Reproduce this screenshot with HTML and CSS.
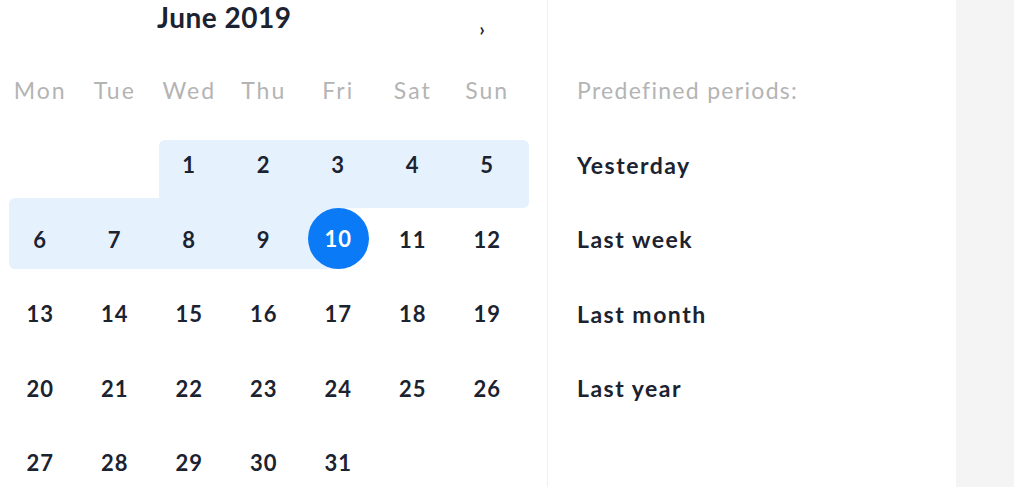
FILE: index.html
```html
<!DOCTYPE html>
<html lang="en">

<head>
    <meta charset="UTF-8">
    <meta name="viewport" content="width=device-width, initial-scale=1.0">
    <title>Date Picker</title>
    <link rel="stylesheet" href="styles.css">
</head>

<body>
    <div class="picker">
        <div class="calendar">
            <div class="cal-header">
                <span class="month-title">June 2019</span>
                <button class="next-btn">&#8250;</button>
            </div>
            <div class="cal-grid">
                <div class="weekday">Mon</div>
                <div class="weekday">Tue</div>
                <div class="weekday">Wed</div>
                <div class="weekday">Thu</div>
                <div class="weekday">Fri</div>
                <div class="weekday">Sat</div>
                <div class="weekday">Sun</div>

                <div class="day empty"></div>
                <div class="day empty"></div>
                <div class="day in-range row-a first-a"><span>1</span></div>
                <div class="day in-range row-a"><span>2</span></div>
                <div class="day in-range row-a"><span>3</span></div>
                <div class="day in-range row-a"><span>4</span></div>
                <div class="day in-range row-a last-a"><span>5</span></div>

                <div class="day in-range row-b first-b"><span>6</span></div>
                <div class="day in-range row-b"><span>7</span></div>
                <div class="day in-range row-b"><span>8</span></div>
                <div class="day in-range row-b"><span>9</span></div>
                <div class="day in-range row-b selected"><span>10</span></div>
                <div class="day"><span>11</span></div>
                <div class="day"><span>12</span></div>

                <div class="day"><span>13</span></div>
                <div class="day"><span>14</span></div>
                <div class="day"><span>15</span></div>
                <div class="day"><span>16</span></div>
                <div class="day"><span>17</span></div>
                <div class="day"><span>18</span></div>
                <div class="day"><span>19</span></div>

                <div class="day"><span>20</span></div>
                <div class="day"><span>21</span></div>
                <div class="day"><span>22</span></div>
                <div class="day"><span>23</span></div>
                <div class="day"><span>24</span></div>
                <div class="day"><span>25</span></div>
                <div class="day"><span>26</span></div>

                <div class="day"><span>27</span></div>
                <div class="day"><span>28</span></div>
                <div class="day"><span>29</span></div>
                <div class="day"><span>30</span></div>
                <div class="day"><span>31</span></div>
            </div>
        </div>
        <div class="periods">
            <div class="periods-title">Predefined periods:</div>
            <div class="period">Yesterday</div>
            <div class="period">Last week</div>
            <div class="period">Last month</div>
            <div class="period">Last year</div>
        </div>
        <div class="side"></div>
    </div>
</body>

</html>
```

FILE: styles.css
```css
body {
    font-family: Lato, "Open Sans", sans-serif;
    margin: 0;
    background-color: #fff;
    color: #1b2230;
}

.picker {
    display: flex;
    height: 487px;
    overflow: hidden;
}

.calendar {
    width: 547px;
    border-right: 1px solid #f0f0f0;
    flex-shrink: 0;
}

.cal-header {
    height: 53px;
    display: flex;
    align-items: flex-start;
    padding-left: 157px;
    box-sizing: border-box;
}

.month-title {
    font-size: 28px;
    font-weight: bold;
    line-height: 34px;
    letter-spacing: 0.5px;
}

.next-btn {
    background: none;
    border: none;
    padding: 0;
    margin: 20px 0 0 188px;
    font-family: inherit;
    font-size: 18px;
    font-weight: bold;
    line-height: 18px;
    color: #1b2230;
    cursor: pointer;
}

.cal-grid {
    display: grid;
    grid-template-columns: repeat(7, 74.5px);
    grid-auto-rows: 74.5px;
    padding-left: 3px;
}

.weekday {
    display: flex;
    align-items: center;
    justify-content: center;
    font-size: 23px;
    letter-spacing: 2px;
    color: #b4b4b4;
}

.day {
    position: relative;
    display: flex;
    align-items: center;
    justify-content: center;
    font-size: 22px;
    font-weight: bold;
    letter-spacing: 1px;
}

.day span {
    position: relative;
    z-index: 1;
}

.day.in-range::before {
    content: "";
    position: absolute;
    left: 0;
    right: 0;
    background: #e6f1fe;
}

.day.row-a::before {
    top: 12px;
    bottom: -6px;
}

.day.row-b::before {
    top: -4px;
    bottom: 8px;
}

.day.first-a::before {
    left: 7px;
    border-top-left-radius: 6px;
}

.day.last-a::before {
    right: -4px;
    border-top-right-radius: 6px;
    border-bottom-right-radius: 6px;
}

.day.first-b::before {
    left: 6px;
    border-top-left-radius: 6px;
    border-bottom-left-radius: 6px;
}

.day.selected::before {
    right: 50%;
}

.day.selected span {
    width: 61px;
    height: 61px;
    border-radius: 50%;
    background: #0a7af6;
    color: #fff;
    display: flex;
    align-items: center;
    justify-content: center;
    margin-top: -2px;
}

.periods {
    width: 408px;
    flex-shrink: 0;
    padding: 53px 0 0 29px;
    box-sizing: border-box;
}

.periods-title,
.period {
    height: 74.5px;
    display: flex;
    align-items: center;
    font-size: 23px;
}

.periods-title {
    color: #b4b4b4;
    letter-spacing: 1.3px;
}

.period {
    font-weight: bold;
    letter-spacing: 1.5px;
    cursor: pointer;
}

.side {
    flex: 1;
    background-color: #f4f4f4;
}
```
